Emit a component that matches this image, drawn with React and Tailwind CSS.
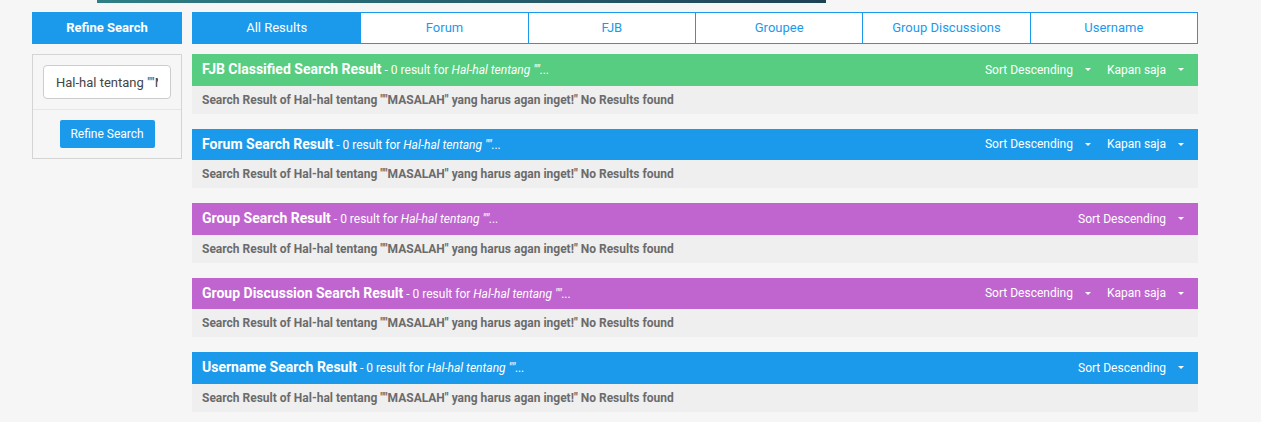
import React from "react";

const QUERY = 'Hal-hal tentang ""MASALAH" yang harus agan inget!"';

const tabs = ["All Results", "Forum", "FJB", "Groupee", "Group Discussions", "Username"];

const sections = [
  { title: "FJB Classified Search Result", color: "bg-[#56cd80]", kapan: true },
  { title: "Forum Search Result", color: "bg-[#1b9aeb]", kapan: true },
  { title: "Group Search Result", color: "bg-[#c065d0]", kapan: false },
  { title: "Group Discussion Search Result", color: "bg-[#c065d0]", kapan: true },
  { title: "Username Search Result", color: "bg-[#1b9aeb]", kapan: false },
];

const Caret = () => (
  <span className="ml-[12px] inline-block h-0 w-0 border-x-[3px] border-t-[3px] border-x-transparent border-t-white" />
);

const ResultBlock = ({ title, color, kapan }) => (
  <div className="mb-[15px]">
    <div className={`${color} flex h-[31.5px] items-center justify-between pl-[10px] pr-[14px] text-white`}>
      <div className="text-[12px]">
        <span className="text-[14px] font-bold">{title}</span>
        <span> - 0 result for </span>
        <span className="italic">Hal-hal tentang ""...</span>
      </div>
      <div className="flex items-center text-[12px]">
        <span className="flex items-center">
          Sort Descending
          <Caret />
        </span>
        {kapan && (
          <span className="ml-[16px] flex items-center">
            Kapan saja
            <Caret />
          </span>
        )}
      </div>
    </div>
    <div className="flex h-[28px] items-center bg-[#efefef] px-[10px] text-[12px] font-bold text-[#6b6b6b]">
      Search Result of {QUERY} No Results found
    </div>
  </div>
);

export default function App() {
  return (
    <div className="min-h-[422px] bg-[#f6f6f6] font-['Roboto',sans-serif]">
      <div className="ml-[97px] h-[3px] w-[729px] bg-gradient-to-r from-[#2e7f87] to-[#1e4255]" />
      <div className="flex gap-[10px] px-[32px] pt-[9px]">
        <aside className="w-[150px] shrink-0">
          <div className="flex h-[32px] items-center justify-center bg-[#1b9aeb] text-[13px] font-bold text-white">
            Refine Search
          </div>
          <div className="mt-[10px] border border-[#d4d4d4]">
            <div className="border-b border-[#e6e6e6] p-[10px]">
              <input
                readOnly
                value={'Hal-hal tentang ""MASALAH" yang harus agan inget!"'}
                className="h-[34px] w-full rounded-[4px] border border-[#cccccc] bg-white px-[12px] text-[13px] text-[#444] focus:outline-none"
              />
            </div>
            <div className="flex justify-center py-[10px]">
              <button className="h-[28px] w-[95px] rounded-[2px] bg-[#1b9aeb] text-[12px] text-white">
                Refine Search
              </button>
            </div>
          </div>
        </aside>
        <main className="w-[1006px] shrink-0">
          <div className="grid h-[32px] grid-cols-6 border border-[#1b9aeb]">
            {tabs.map((t, i) => (
              <div
                key={t}
                className={`flex items-center justify-center text-[13px] ${
                  i === 0 ? "bg-[#1b9aeb] text-white" : "border-l border-[#1b9aeb] bg-white text-[#1b9aeb]"
                }`}
              >
                {t}
              </div>
            ))}
          </div>
          <div className="mt-[10px]">
            {sections.map((s) => (
              <ResultBlock key={s.title} {...s} />
            ))}
          </div>
        </main>
      </div>
    </div>
  );
}
